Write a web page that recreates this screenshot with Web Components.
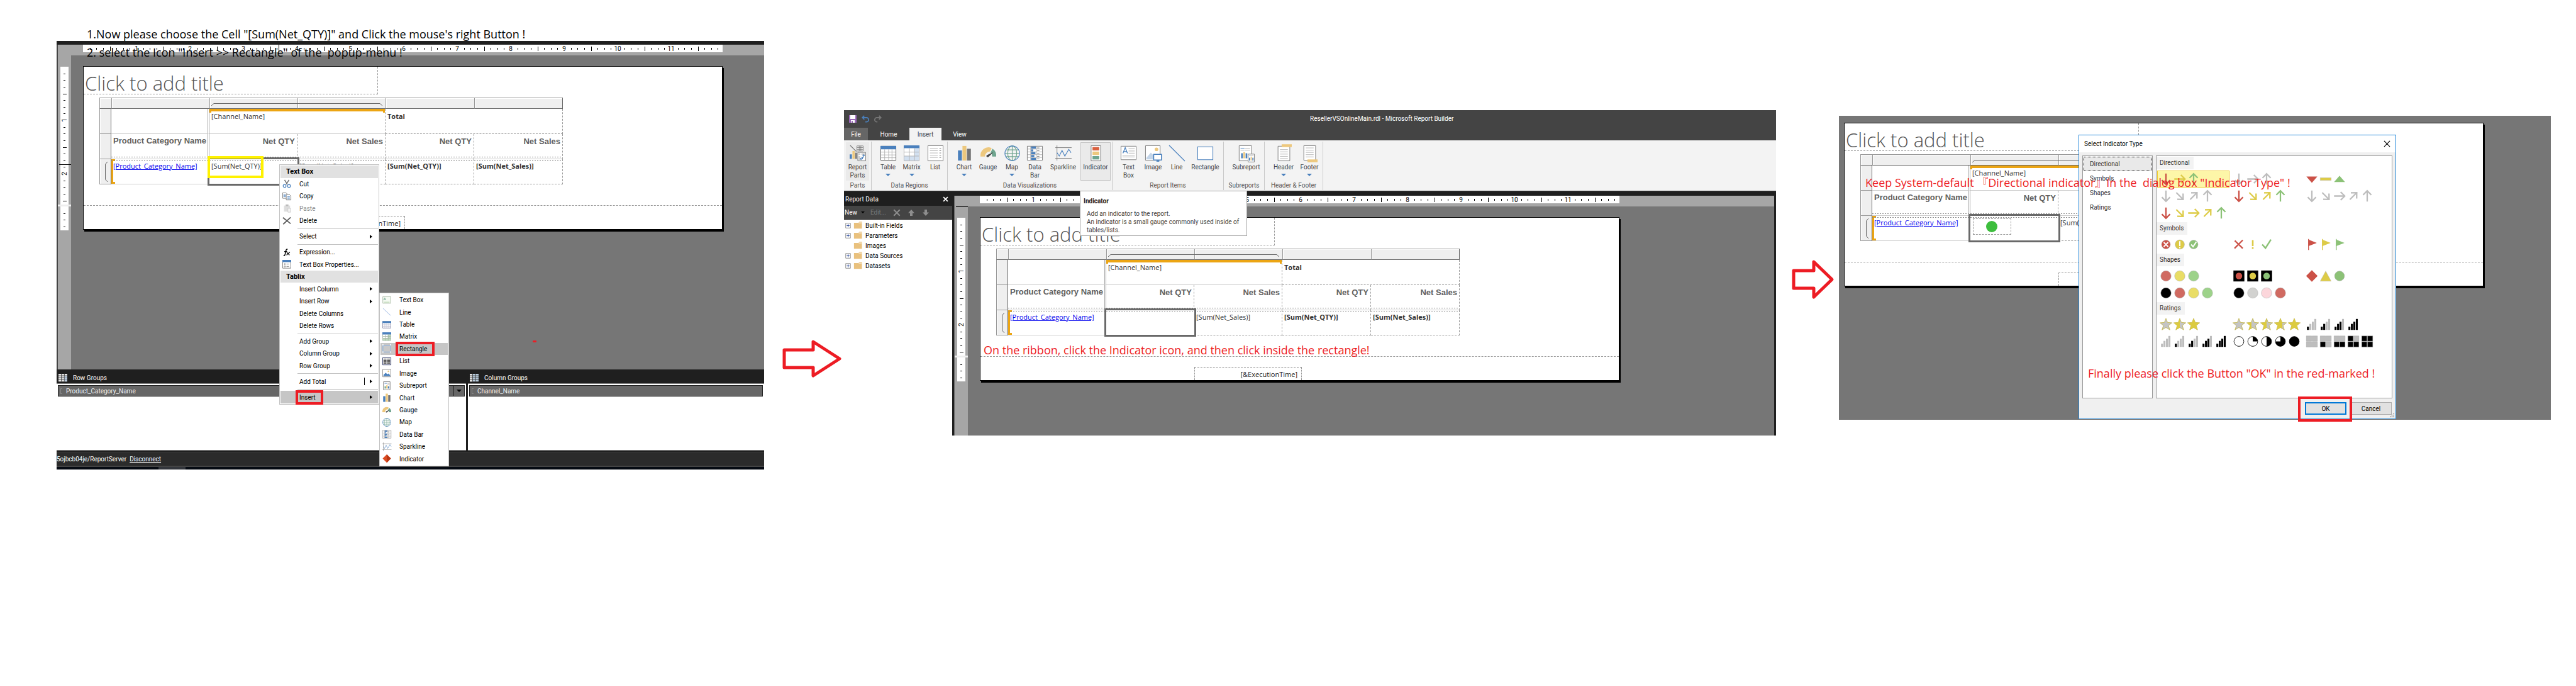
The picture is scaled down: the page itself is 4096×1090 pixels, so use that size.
<!DOCTYPE html>
<html lang="en">
<head>
<meta charset="utf-8">
<title>Report Builder: adding an indicator</title>
<style>
  body { margin: 0; background: #fff; font-family: "Open Sans", "Noto Sans CJK TC", sans-serif; }
</style>
</head>
<body>
<tutorial-board></tutorial-board>

<script>
/* ---------- helpers ---------- */
const UI = 'Roboto, "Liberation Sans", sans-serif';
const define = (name, css, html, setup) => {
  const tpl = document.createElement('template');
  tpl.innerHTML = `<style>*{box-sizing:border-box}${css}</style>${html}`;
  customElements.define(name, class extends HTMLElement {
    constructor() {
      super();
      this.attachShadow({ mode: 'open' }).append(tpl.content.cloneNode(true));
    }
    connectedCallback() { if (setup) setup(this, this.shadowRoot); }
  });
};

/* ---------- icons ---------- */
const G = '#757575', B = '#4a80bd', O = '#edc87e', N = '#6fa58f', L = '#b0b0b0';
const hl = (x1, x2, ys, c = L, w = 1) => ys.map(y => `<path d="M${x1} ${y}H${x2}" stroke="${c}" stroke-width="${w}"/>`).join('');
const ICONS = {
  /* ribbon, on a 28 unit square */
  parts: [28, `<path d="M1 0L12 11" stroke="${G}" stroke-width="1.2"/><path d="M0 16h4v8H0z" fill="${B}"/><path d="M5 10h4v14H5z" fill="${O}"/><path d="M10 13h3v11h-3z" fill="${G}"/><path d="M13 1h11v9H13zM13 4h11M13 7h11M17 1v9M20 1v9" fill="#fff" stroke="${G}"/><path d="M14.500 12.500h14v15h-14z" fill="#fff" stroke="${G}"/><path d="M16 14h3v3h-3zM21 14h6v3h-6zM16 19h3v7h-3z" fill="#ccc"/><path d="M25 17v4h-4M19 24h4v-3M23 18.500l2-2 2 2M21 22l-2 2 2 2" fill="none" stroke="${B}" stroke-width="1.200"/>`],
  table: [28, `<path d="M.5 1.500h27v25H.5z" fill="#fff" stroke="${G}"/><path d="M0 1h28v6H0z" fill="${B}"/>${hl(1, 27, [12, 17, 22])}<path d="M7.500 7v19M14.500 7v19M20.500 7v19" stroke="${L}"/><path d="M.5 7v19.500h27V7" fill="none" stroke="${G}"/>`],
  matrix: [28, `<path d="M.5.5h27v27H.5z" fill="#fff" stroke="${L}"/><path d="M19 5h8v22h-8zM1 19h26v8H1z" fill="#d2e0f0"/><path d="M0 0h28v5H0z" fill="${B}"/>${hl(1, 27, [12, 19])}<path d="M10 5v22M19 5v22" stroke="${L}"/>`],
  list: [28, `<path d="M.5.5h27v27H.5z" fill="#fff" stroke="${G}"/>${hl(4, 18, [5.5, 9.5, 13.5, 17.5, 21.5])}${hl(21, 24, [5.5, 9.5, 13.5, 17.5, 21.5], G)}`],
  chart: [28, `<path d="M2.500 9h7v18h-7z" fill="${B}"/><path d="M10.500 1h7v26h-7z" fill="${O}"/><path d="M18.500 6h7v21h-7z" fill="${G}"/>`],
  gauge: [28, `<path d="M0 20a14 15 0 0 1 20-15l-3 6A8.500 9 0 0 0 8 20z" fill="${O}"/><path d="M21.500 6A15 15 0 0 1 28 20h-7a9 9 0 0 0-3-7z" fill="${N}"/><path d="M23 12l-8.500 8.500a2.500 2 0 1 1-3-3.200z" fill="#444"/>`],
  map: [28, `<g fill="none" stroke-width="1.300"><path d="M3 8h22M1 14h26M3 20h22" stroke="${N}"/><ellipse cx="14" cy="14" rx="8" ry="13" stroke="${N}"/><path d="M14 1v26" stroke="${N}"/><circle cx="14" cy="14" r="13" stroke="${B}"/></g>`],
  databar: [28, `<path d="M.5 1.500h27v25H.5z" fill="#fff" stroke="${G}"/><path d="M7 2h9v4H7zM7 7h4v4H7zM7 12h8v4H7zM7 17h6v4H7zM7 22h9v4H7z" fill="${B}"/>${hl(1, 27, [6.5, 11.5, 16.5, 21.5])}<path d="M6.500 2v24M16.500 2v24" stroke="${L}"/>${hl(18, 22, [4.5, 9.5, 14.5, 19.5, 24], G)}`],
  sparkline: [28, `<path d="M3 0v27M0 4h29M0 23h29" stroke="${G}" fill="none"/><path d="M3 13l4 6 5-10 5 10 7-12 4 6" fill="none" stroke="${B}" stroke-width="1.300"/>`],
  indicator: [28, `<path d="M5.500.5h17v27h-17z" fill="#fff" stroke="${G}"/><path d="M8 3h12v6H8z" fill="#d9603f"/><path d="M8 11h12v6H8z" fill="${O}"/><path d="M8 19h12v6H8z" fill="${N}"/>`],
  textbox: [28, `<path d="M.5 1.500h27v24H.5z" fill="#fff" stroke="${G}"/><path d="M4 14L8 4l4 10M5.500 11h5" fill="none" stroke="${B}" stroke-width="1.500"/>${hl(14, 25, [5.5, 8.5, 11.5, 14.5])}${hl(3, 25, [17.5, 20.5])}`],
  image: [28, `<path d="M.5.5h26v26H.5z" fill="#fff" stroke="${G}"/><path d="M2 25V22l8-9 6 6v6z" fill="#c3d5e9"/><circle cx="20" cy="7" r="3.200" fill="${O}"/><path d="M15 16h14v10H15z" fill="#fff" stroke="${B}" stroke-width="1.800"/><path d="M20 28h5" stroke="${B}" stroke-width="2"/>`],
  line: [28, `<path d="M0 0l28 28" stroke="${B}" stroke-width="1.300"/>`],
  rectangle: [28, `<path d="M.5 2.500h27v23H.5z" fill="#fff" stroke="${B}" stroke-width="1.200"/>`],
  subreport: [28, `<path d="M1.500.5h22v27h-22z" fill="#fff" stroke="${G}"/><path d="M4 5h7" stroke="${B}"/>${hl(12, 21, [5.5, 8.5])}${hl(4, 11, [8.5])}<path d="M5 14h3v9H5z" fill="${B}"/><path d="M9 12h3v11H9z" fill="${O}"/><path d="M13 14h3v9h-3z" fill="${B}"/><path d="M17.500 15.500h11v14h-11z" fill="#fff" stroke="${G}"/><path d="M19 22h2v5h-2z" fill="${B}"/><path d="M22 20h2v7h-2z" fill="${O}"/><path d="M25 22h2v5h-2z" fill="${B}"/>${hl(19, 27, [18])}`],
  header: [28, `<path d="M3.500 1.500h21v26h-21z" fill="#fff" stroke="${G}"/>${hl(7, 21, [7.5, 11.5, 15.5, 19.5, 23.5])}<path d="M10-2h18v5H10z" fill="${O}"/>`],
  footer: [28, `<path d="M3.500.5h21v26h-21z" fill="#fff" stroke="${G}"/>${hl(7, 21, [4.5, 8.5, 12.5, 16.5, 20.5])}<path d="M10 25h18v5H10z" fill="${O}"/>`],
  /* menu, on a 16 unit square */
  cut: [16, `<path d="M4 1l5 8M12 1L7 9" stroke="${G}" stroke-width="1.800"/><g fill="none" stroke="${B}" stroke-width="1.400"><circle cx="4" cy="12" r="2.600"/><circle cx="12" cy="12" r="2.600"/></g>`],
  copy: [16, `<path d="M.6 1.500h6l2 2v8h-8z" fill="#fff" stroke="${G}"/><path d="M7 4.500h5.500l3 3v7H7z" fill="#fff" stroke="${G}"/>${hl(2, 6, [4.5, 6.5, 8.5], B)}${hl(9, 13.5, [8.5, 10.5, 12.5], B)}`],
  paste: [16, `<path d="M3 3h11v11H3z" fill="#ddd"/><path d="M6 1h5v3H6z" fill="#bbb"/><path d="M10 8h5v7h-5z" fill="#f4f4f4" stroke="#ccc"/>`],
  delete: [16, `<path d="M1 2l14 11M15 1.500L1.500 14" stroke="#5d5d5d" stroke-width="2"/>`],
  fx: [16, `<path d="M9.500 2.500C7 1.500 6.500 4 5.500 9S4 14.500 2 13.500M3.500 6.500h5" fill="none" stroke="#000" stroke-width="1.700"/><path d="M8 8l5 5M13.500 7.500L7.500 13" stroke="#000" stroke-width="1.500"/>`],
  props: [16, `<path d="M.6 1h14.800v14H.6z" fill="#fff" stroke="${G}"/><path d="M0 0h16v4H0z" fill="${B}"/><circle cx="4.500" cy="7.500" r="1.300" fill="${G}"/><circle cx="4.500" cy="11.800" r="1.100" fill="none" stroke="${G}"/>${hl(7.5, 12, [7.5, 11.8], G)}`],
  mtext: [16, `<path d="M.8 1.500h14.400v12H.8z" fill="#f5faf2" stroke="#a9b9a5"/><path d="M2.500 8L4.300 3.500 6 8M3 6.500h2.500" fill="none" stroke="${N}"/><path d="M3 11.500h10" stroke="#a8cfa0"/>`],
  mline: [16, `<path d="M1 1l14 13" stroke="#8faee0"/>`],
  mrect: [16, `<path d="M1 2h14v12H1z" fill="#c9c9c9" stroke="#8cb4e2" stroke-width="1.200"/><path d="M0 0h2v2H0zM14 0h2v2h-2zM0 13h2v2H0zM14 13h2v2h-2z" fill="#fff"/>`],
  mlist: [16, `<path d="M.5 1.500h15v13H.5z" fill="#fff" stroke="#222c5c"/>${hl(2, 7.5, [4, 6.5, 9, 11.5], '#111', 1.3)}${hl(8.5, 14, [4, 6.5, 9, 11.5], '#111', 1.3)}`],
  mtable: [16, `<path d="M.6 2h14.800v12H.6z" fill="#fff" stroke="#8c8ca8"/><path d="M0 1.500h16v3.500H0z" fill="${B}"/><path d="M1 8h14M1 11h14M4.500 5v9M8 5v9M11.500 5v9" stroke="#c5c5d5"/>`],
  mmatrix: [16, `<path d="M.6 1h14.800v14H.6z" fill="#fff" stroke="#a5b5a5"/><path d="M10 4h5v11H1v-4h9z" fill="#c0dcc0"/><path d="M0 0h16v4H0z" fill="${B}"/><path d="M1 7.500h14M1 11h14M5.500 4v11M10.500 4v11" stroke="#a5b5a5"/>`],
  mimage: [16, `<path d="M.6 1h14.800v13.500H.6z" fill="#fff" stroke="#888"/><path d="M2 13V11l4-4 3 3 2-1.500 3 3V13z" fill="${B}"/><circle cx="11" cy="4.500" r="1.500" fill="${O}"/>`],
  msub: [16, `<path d="M2 .6h12v14.800H2z" fill="#fff" stroke="${G}"/>${hl(4, 8, [3.5], B)}${hl(9, 13, [3.5, 5])}<path d="M4 9h2.500v4H4z" fill="${N}"/><path d="M7 7h2.500v6H7z" fill="${O}"/><path d="M10 9h2.500v4H10z" fill="${B}"/>`],
  mindicator: [16, `<path d="M8 0l7.500 7.500L8 15 .5 7.500z" fill="#dc4b22"/><path d="M8 0l7.500 7.500L8 15z" fill="#b83714"/>`],
  grid: [16, `<path d="M0 0h16v14H0z" fill="#e6e6e6"/><path d="M0 3.500h16M0 7h16M0 10.500h16M5.300 0v14M10.700 0v14" stroke="#3a3a3a"/><path d="M11 4h5v10h-5z" fill="#9db8d6" opacity=".6"/>`],
  gridcols: [16, `<path d="M0 0h16v14H0z" fill="#b8cbdc"/><path d="M0 0h4.500v14H0z" fill="#e6e6e6"/><path d="M0 3.500h16M0 7h16M0 10.500h16M5 0v14M10.700 0v14" stroke="#3a3a3a"/>`],
  /* window and tree */
  save: [12, `<path d="M0 0h12v12H0z" fill="#9968b8"/><path d="M2 0h8v6H2z" fill="#fff"/><path d="M3 8h6v4H3z" fill="#fff"/><path d="M4 9h2v3H4z" fill="#9968b8"/>`],
  undo: [14, `<path d="M5 1L1.500 4.500 5 8M2 4.500h7a3.700 3.700 0 0 1 0 8H7" fill="none" stroke="${B}" stroke-width="2"/>`],
  redo: [14, `<path d="M9 1l3.500 3.500L9 8M12 4.500H5a3.700 3.700 0 0 0 0 8h1" fill="none" stroke="#777" stroke-width="2"/>`],
  plus: [10, `<path d="M.8.8h8.400v8.400H.8z" fill="#fff" stroke="#8a8a8a"/><path d="M2.500 5h5M5 2.500v5" stroke="#27469a" stroke-width="1.200"/>`],
  folder: [16, `<path d="M1 3.500h8l2-2h4.500V14H1z" fill="#e9c17e"/><path d="M9.500 3.500h5.500" stroke="#fff"/>`],
  remove: [14, `<path d="M1.500 1.500l11 11M12.500 1.500l-11 11" stroke="#8d8d8d" stroke-width="2.400"/>`],
  up: [12, `<path d="M6 1l5 5.500H8V11H4V6.500H1z" fill="#8d8d8d"/>`],
  down: [12, `<path d="M6 11L1 5.500h3V1h4v4.500h3z" fill="#8d8d8d"/>`],
  close: [12, `<path d="M1 1l10 10M11 1L1 11" stroke="currentColor" stroke-width="1.300"/>`],
  closebold: [12, `<path d="M1.500 1.500l9 9M10.500 1.500l-9 9" stroke="#fff" stroke-width="2.400"/>`]
};
define('ui-icon',
  `:host{display:block;width:14px;height:14px;flex:none}svg{display:block;width:100%;height:100%;overflow:visible}`,
  `<svg aria-hidden="true"></svg>`,
  (el, root) => {
    const [n, art] = ICONS[el.getAttribute('name')];
    const svg = root.querySelector('svg');
    svg.setAttribute('viewBox', `0 0 ${n} ${n}`);
    svg.innerHTML = art;
  });

/* ---------- notes and arrows ---------- */
define('step-note',
  `:host{display:block;position:absolute;white-space:pre;z-index:5;color:#ed1c24;font:18px/29px "Open Sans","Noto Sans CJK TC",sans-serif}`,
  `<slot></slot>`);

define('step-arrow',
  `:host{display:block}svg{display:block;overflow:visible}`,
  `<svg fill="none" stroke="#ed1c24" stroke-width="5" stroke-linejoin="round"><path/></svg>`,
  (el, root) => {
    const w = +el.getAttribute('width'), h = +el.getAttribute('height'), neck = +el.getAttribute('neck'), t = +el.getAttribute('shaft');
    const svg = root.querySelector('svg'), a = (h - t) / 2;
    svg.setAttribute('width', w); svg.setAttribute('height', h);
    svg.firstElementChild.setAttribute('d', `M2 ${a}H${neck}V2L${w - 3} ${h / 2}L${neck} ${h - 2}V${h - a}H2Z`);
  });

/* ---------- rulers: 85px to the inch, ticks on each eighth ---------- */
const INCH = 85;
const eighths = (len, fn) => { let s = ''; for (let k = 1; k * INCH / 8 < len - 2; k++) s += fn(k, Math.round(k * INCH / 8)); return s; };
define('ruler-top',
  `:host{display:block;background:#fff;height:12px}svg{display:block;width:100%;height:12px}text{font:10px ${UI};text-anchor:middle}`,
  `<svg></svg>`,
  (el, root) => {
    const m = el.getAttribute('marker');
    root.querySelector('svg').innerHTML = eighths(1017, (k, x) =>
      k % 8 === 0 ? `<text x="${x}" y="10">${k / 8}</text>`
      : k % 4 === 0 ? `<path d="M${x}.5 3v7" stroke="#000"/>` : `<path d="M${x}.5 5v3" stroke="#000"/>`)
      + (m ? `<path d="M${m}.5 0v12" stroke="#000"/>` : '');
  });
define('ruler-side',
  `:host{display:flex;flex-direction:column;flex:none;width:21px;background:#a6a6a6;padding-top:18px;position:relative}
   div{width:13px;background:#fff;margin-left:4px}.body{height:219px}.foot{height:38px}.gap{width:21px;height:3px;margin:0;background:#eee}
   svg{display:block;width:13px;height:100%;overflow:visible}text{font:10px ${UI};text-anchor:middle}`,
  `<div class="body"><svg></svg></div><div class="gap"></div><div class="foot"><svg></svg></div>`,
  (el, root) => {
    const tick = (k, y) => k % 8 === 0 ? `<text transform="translate(10 ${y}) rotate(-90)">${k / 8}</text>`
      : k % 4 === 0 ? `<path d="M4 ${y}.5h6" stroke="#000"/>` : `<path d="M5 ${y}.5h3" stroke="#000"/>`;
    const [a, b] = root.querySelectorAll('svg');
    a.innerHTML = eighths(219, tick) + `<path d="M-2 ${el.getAttribute('marker')}.5h19" stroke="#000"/>`;
    b.innerHTML = eighths(38, tick);
  });

/* ---------- report page with its tablix ---------- */
const DASH = '1px dashed #999';
define('report-page', `
  :host{display:block;position:relative;flex:none;width:1017px;background:#fff;border:1px solid #000;box-shadow:2px 3px 0 #000;color:#333;font:11px/15px "Open Sans",sans-serif}
  .body{height:221px;border-bottom:${DASH}}
  .title{width:468px;height:44px;padding:8px 0 0 2px;border-right:${DASH};border-bottom:${DASH};font-size:31px;line-height:36px;font-weight:300;color:#555}
  .foot{height:37px;display:flex}
  .stamp{margin:16px 0 0 340px;width:171px;height:21px;border:${DASH};border-bottom:0;text-align:right;padding:3px 6px 0 0;color:#222}
  table{margin:5px 0 0 25px;width:737px;table-layout:fixed;border-collapse:separate;border-spacing:0}
  td,th{position:relative;height:40px;padding:4px 3px 0;vertical-align:top;text-align:left;font-weight:400;white-space:nowrap;border:0 dashed #999}
  thead th{height:18px;background:#efefef;border:solid #999;border-width:1px 0 1px 1px;border-bottom-color:#666;box-shadow:inset 1px 1px #fff;padding:0}
  thead th:last-child{border-right:1px solid #666}
  tbody th{background:#efefef;border:solid #999;border-width:0 1px 1px 1px;border-right-color:#666;box-shadow:inset 1px 0 #fff}
  .b{font-weight:700}
  .solid{border-bottom:1px solid #ccc}.dash{border-bottom-width:1px}.r{border-right-width:1px}
  .head{font:700 13px/15px "Liberation Sans",sans-serif;color:#606060;text-align:right}
  .left{text-align:left;padding-top:3px}
  .last td{padding-top:3px}
  .up::after,.last td::after{content:"";position:absolute;left:0;right:0;height:1px;background:repeating-linear-gradient(90deg,#888 0 2px,transparent 2px 4px)}
  .up::after{bottom:2px}.last td::after{top:2px}
  .up{border-bottom:1px solid #ccc}
  .double{border-right:3px double #aaa}
  a{color:#00e}
  .group{position:absolute;left:0;right:0;top:0;height:6px;border:solid #eca513;border-width:4px 3px 0}
  .rowgroup{position:absolute;left:0;top:0;bottom:0;width:6px;border:solid #eca513;border-width:3px 0 3px 3px}
  .span,.vspan{position:absolute;fill:none;stroke:#666;overflow:visible}
  .span{left:2px;top:7px;width:275px;height:5px;z-index:1}.vspan{left:7px;top:4px;width:5px;height:33px}
  .sel::before{content:"";position:absolute;inset:-3px -3px -2px -3px;border:3px solid #696969;z-index:1}`,
  `<div class="body">
    <div class="title">Click to add title</div>
    <table>
      <colgroup><col style="width:19px"><col style="width:156px"><col style="width:140px"><col style="width:140px"><col style="width:141px"><col></colgroup>
      <thead><tr><th></th><th></th><th><svg class="span"><path d="M0 5L4 1.500H268L272 5"/></svg></th><th></th><th></th><th></th></tr></thead>
      <tbody>
        <tr><th></th><td class="solid double"></td><td class="solid r" colspan="2"><span class="group"></span>[Channel_Name]</td><td class="dash r b" colspan="2">Total</td></tr>
        <tr><th></th><td class="head left up double">Product Category Name</td><td class="head up r">Net QTY</td><td class="head up r">Net Sales</td><td class="head up r">Net QTY</td><td class="head up r">Net Sales</td></tr>
        <tr class="last"><th><svg class="vspan"><path d="M5 0L1.500 4V28L5 32"/></svg></th><td class="solid"><span class="rowgroup"></span><a href="#drill">[Product_Category_Name]</a></td><td class="sel"><slot name="cell"></slot></td><td class="dash r">[Sum(Net_Sales)]</td><td class="dash r b">[Sum(Net_QTY)]</td><td class="dash r b">[Sum(Net_Sales)]</td></tr>
      </tbody>
    </table>
  </div>
  <div class="foot"><div class="stamp">[&amp;ExecutionTime]</div></div>`);

define('report-designer', `
  :host{display:flex;flex-direction:column;min-width:0;overflow:hidden;background:#767676}
  .top{height:17px;background:#a6a6a6;padding-left:40px;flex:none}
  .main{display:flex;flex:1;min-height:0}
  .canvas{flex:1;min-width:0;padding:17px 0 0 19px}
  ruler-top{width:1017px}`,
  `<div class="top"><ruler-top></ruler-top></div><div class="main"><ruler-side></ruler-side><div class="canvas"><slot></slot></div></div>`,
  (el, root) => {
    const top = root.querySelector('ruler-top'), side = root.querySelector('ruler-side');
    for (const [r, a] of [[top, 'marker-x'], [side, 'marker-y']]) {
      const c = document.createElement(r.localName);
      if (el.hasAttribute(a)) c.setAttribute('marker', el.getAttribute(a));
      r.replaceWith(c);
    }
  });

/* ---------- menus ---------- */
define('popup-menu',
  `:host{display:flex;flex-direction:column;position:absolute;z-index:3;background:#fff;border:1px solid #c3c3c3;padding:1px;color:#000;font:10px ${UI}}`,
  `<slot></slot>`);
define('menu-title',
  `:host{display:flex;align-items:center;flex:22 1 0;min-height:0;background:#e1e1e1;padding-left:9px;font-weight:700;font-size:11px}`, `<slot></slot>`);
define('menu-line', `:host{display:flex;align-items:center;flex:6 1 0;min-height:0}i{flex:1;height:1px;background:#c3c3c3;margin-left:27px}`, `<i></i>`);
define('menu-item', `
  :host{display:block;flex:22 1 0;min-height:0}
  button{display:grid;grid-template-columns:27px 1fr auto;align-items:center;width:100%;height:100%;padding:0 9px 0 3px;border:0;background:none;color:inherit;font:inherit;text-align:left}
  :host([dim]) button{color:#8d8d8d}
  :host([hot]) button{background:#c6c6c6}
  .label{position:relative;justify-self:start}
  :host([marked]) .label::after{content:"";position:absolute;inset:-6px -12px -6px -6px;border:4px solid #ed1c24;z-index:1}
  .arrow{display:none;border:solid transparent;border-width:3px 0 3px 4px;border-left-color:#000}
  :host([sub]) .arrow{display:block}
  :host([split]) .arrow{position:relative}
  :host([split]) .arrow::before{content:"";position:absolute;left:-13px;top:-6px;height:12px;width:1px;background:#000}`,
  `<button type="button" role="menuitem"><span class="icon"></span><span class="label"><slot></slot></span><span class="arrow"></span></button>`,
  (el, root) => {
    const n = el.getAttribute('icon');
    if (n) root.querySelector('.icon').innerHTML = `<ui-icon name="${n}"></ui-icon>`;
  });

/* ---------- row and column groups, status bar ---------- */
define('group-pane', `
  :host{display:block;flex:none;background:#1f1f1f;color:#fff;font:10px ${UI}}
  .cols{display:grid;grid-template-columns:651fr 471fr;column-gap:3px}
  .cap{display:flex;align-items:center;gap:9px;height:22px;padding:6px 0 0 3px;line-height:14px}
  .box{height:107px;background:#fff;border-top:1px solid #888;border-bottom:1px solid #888;padding:2px}
  .bar{display:flex;height:18px;background:#666;border:1px solid #222;color:#f3f3f3;align-items:center;padding-left:3px}
  .bar i{width:3px;height:9px;border:1px solid #888;border-right:0;margin-right:6px}
  .bar button{margin-left:auto;width:17px;height:100%;padding:0;border:0;border-left:1px solid #222;background:none;display:grid;place-items:center}
  .bar button::after{content:"";border:4px solid transparent;border-top-color:#000;border-bottom:0}
  .status{height:23px;margin-top:3px;background:#2b2b2b;border-top:1px solid #444;border-bottom:2px solid #444;line-height:20px;overflow:hidden;white-space:nowrap}
  .status a{color:#fff;margin-left:5px}
  .task{height:4px;background:#050a12;padding-left:162px}.task i{display:block;width:43px;height:4px;background:#33363c}`,
  `<div class="cols"><div class="cap"><ui-icon name="grid"></ui-icon>Row Groups</div><div class="cap"><ui-icon name="gridcols"></ui-icon>Column Groups</div>
   <div class="box"><div class="bar"><i></i>Product_Category_Name<button type="button" aria-label="Row group options"></button></div></div>
   <div class="box"><div class="bar"><i></i>Channel_Name</div></div></div>
   <div class="status">5ojbcb04je/ReportServer<a href="#disconnect">Disconnect</a></div><div class="task"><i></i></div>`);

/* ---------- ribbon ---------- */
define('ribbon-button', `
  :host{display:block;flex:none}
  button{display:flex;flex-direction:column;align-items:center;width:100%;height:61px;padding:5px 0 0;border:1px solid transparent;border-top:0;background:none;color:#444;font:10px/13px ${UI}}
  :host([lit]) button{background:#eaeaea}
  :host([hover]) button{background:#eaeaea;border:1px solid #c4c4c4;padding-top:4px}
  ui-icon{width:25px;height:25px;margin-bottom:3px}
  .drop{display:none;border:4px solid transparent;border-top-color:${B};border-bottom:0;margin-top:4px}
  :host([drop]) .drop{display:block}`,
  `<button type="button"><span class="ico"></span><slot></slot><span class="drop"></span></button>`,
  (el, root) => {
    root.querySelector('.ico').innerHTML = `<ui-icon name="${el.getAttribute('icon')}"></ui-icon>`;
    el.style.width = el.getAttribute('size') + 'px';
  });
define('ribbon-group', `
  :host{display:flex;flex-direction:column;flex:none;position:relative;height:77px;margin-top:2px;border-right:1px solid #c9c9c9;color:#555;font:10px/14px ${UI}}
  .row{display:flex;padding-top:1px;height:64px}
  .name{text-align:center}`,
  `<div class="row"><slot></slot></div><div class="name"></div>`,
  (el, root) => {
    root.querySelector('.name').textContent = el.getAttribute('label');
    root.querySelector('.row').style.paddingLeft = el.getAttribute('inset') + 'px';
    el.style.width = el.getAttribute('size') + 'px';
  });
define('app-window', `
  :host{display:flex;flex-direction:column;position:relative;height:517px;font:10px ${UI}}
  .title{background:#444;color:#fff;height:48px;display:flex;flex-direction:column;flex:none}
  .cap{display:grid;grid-template-columns:1fr 1fr;height:28px;align-items:center;line-height:28px}
  .quick{display:flex;gap:8px;padding-left:8px}.quick ui-icon{width:12px;height:12px}
  .tabs{display:flex;gap:3px;height:20px}
  .tabs button{border:0;padding:0;background:none;color:#fff;font:inherit;width:60px}
  .tabs .file{width:38px;background:#666}.tabs .on{width:51px;background:#f3f3f3;color:#444}.tabs .view{width:52px}
  .ribbon{display:flex;height:81px;background:#f3f3f3;border-bottom:1px solid #444;flex:none}
  .work{display:flex;flex:1;min-height:0;background:#1f1f1f}
  .data{width:173px;display:flex;flex-direction:column;color:#fff}
  .head{display:flex;justify-content:space-between;align-items:center;height:23px;padding:2px 7px 0 2px}.head ui-icon{width:9px;height:9px}
  .tools{display:flex;align-items:center;height:21px;background:#444;margin-right:1px;padding-left:1px}
  .tools b{font-weight:400;color:#777;margin:0 11px 0 9px}.tools ui-icon{width:12px;height:12px;margin-right:11px}
  .tools i{border:3px solid transparent;border-top-color:#000;border-bottom:0;margin-left:6px}
  ul{list-style:none;margin:0 1px 0 0;padding:1px 0 0 2px;flex:1;background:#fff;color:#000;border-top:1px solid #222}
  li{display:grid;grid-template-columns:13px 19px 1fr;align-items:center;height:16px}
  li .p{width:9px;height:9px}
  .design{flex:1;min-width:0;display:flex;flex-direction:column;padding:7px 3px 0 2px}
  report-designer{flex:1;min-height:0;border-left:1px solid #666}
  .tip{position:absolute;left:375px;top:128px;width:266px;height:72px;z-index:3;background:#fff;border:1px solid #a5a5a5;color:#444;line-height:13px;padding:9px 9px 0 5px}
  .tip b{display:block;color:#222;margin-bottom:7px}.tip p{margin:0 0 0 5px;width:250px}`,
  `<div class="title"><div class="cap"><div class="quick"><ui-icon name="save"></ui-icon><ui-icon name="undo"></ui-icon><ui-icon name="redo"></ui-icon></div><span>ResellerVSOnlineMain.rdl - Microsoft Report Builder</span></div>
   <div class="tabs"><button type="button" class="file">File</button><button type="button">Home</button><button type="button" class="on">Insert</button><button type="button" class="view">View</button></div></div>
   <div class="ribbon">
    <ribbon-group label="Parts" size="44" inset="3"><ribbon-button icon="parts" size="37" lit>Report<br>Parts</ribbon-button></ribbon-group>
    <ribbon-group label="Data Regions" size="121" inset="7"><ribbon-button icon="table" size="38" drop>Table</ribbon-button><ribbon-button icon="matrix" size="37" drop>Matrix</ribbon-button><ribbon-button icon="list" size="38">List</ribbon-button></ribbon-group>
    <ribbon-group label="Data Visualizations" size="262" inset="7"><ribbon-button icon="chart" size="38" drop>Chart</ribbon-button><ribbon-button icon="gauge" size="38">Gauge</ribbon-button><ribbon-button icon="map" size="38" drop>Map</ribbon-button><ribbon-button icon="databar" size="35">Data<br>Bar</ribbon-button><ribbon-button icon="sparkline" size="55">Sparkline</ribbon-button><ribbon-button icon="indicator" size="48" hover>Indicator</ribbon-button></ribbon-group>
    <ribbon-group label="Report Items" size="177" inset="6"><ribbon-button icon="textbox" size="39">Text<br>Box</ribbon-button><ribbon-button icon="image" size="39">Image</ribbon-button><ribbon-button icon="line" size="36">Line</ribbon-button><ribbon-button icon="rectangle" size="55">Rectangle</ribbon-button></ribbon-group>
    <ribbon-group label="Subreports" size="65" inset="7"><ribbon-button icon="subreport" size="57">Subreport</ribbon-button></ribbon-group>
    <ribbon-group label="Header &amp; Footer" size="93" inset="9"><ribbon-button icon="header" size="42" drop>Header</ribbon-button><ribbon-button icon="footer" size="40" drop>Footer</ribbon-button></ribbon-group>
   </div>
   <div class="work">
    <div class="data"><div class="head">Report Data<ui-icon name="closebold"></ui-icon></div>
     <div class="tools">New<i></i><b>Edit...</b><ui-icon name="remove"></ui-icon><ui-icon name="up"></ui-icon><ui-icon name="down"></ui-icon></div>
     <ul><li><ui-icon class="p" name="plus"></ui-icon><ui-icon name="folder"></ui-icon>Built-in Fields</li><li><ui-icon class="p" name="plus"></ui-icon><ui-icon name="folder"></ui-icon>Parameters</li><li><span></span><ui-icon name="folder"></ui-icon>Images</li><li><ui-icon class="p" name="plus"></ui-icon><ui-icon name="folder"></ui-icon>Data Sources</li><li><ui-icon class="p" name="plus"></ui-icon><ui-icon name="folder"></ui-icon>Datasets</li></ul></div>
    <div class="design"><report-designer marker-y="-17"><report-page></report-page></report-designer></div>
   </div>
   <div class="tip" role="tooltip"><b>Indicator</b><p>Add an indicator to the report.</p><p>An indicator is a small gauge commonly used inside of tables/lists.</p></div>`);

/* ---------- indicator gallery ---------- */
const R = '#cb5147', Y = '#ddcb47', V = '#8cc277', S = '#bdbdbd', K = '#000';
const PR = '#d06a61', PY = '#e9dd66', PV = '#9dd28a';
let clipId = 0;
const arrow = (c, deg) => {
  const d = deg % 90 ? 'M-9 0H8.500M1-7.500L8.700 0 1 7.500' : 'M-10 0H9M2-7.500L9.500 0 2 7.500';
  return `<g transform="rotate(${deg})" fill="none" stroke="${c}" stroke-width="2.600"><path d="${d}"/></g>`;
};
const disc = (c, r = 9.5) => `<circle r="${r}" fill="${c}" stroke="#aaa" stroke-width=".6"/>`;
const STAR = 'M0-11L2.900-3.600 11-3 4.700 2 7.200 10 0 5.600-7.200 10-4.700 2-11-3-2.900-3.600Z';
const star = f => { const id = 'c' + clipId++; return `<clipPath id="${id}"><path d="M-12-12h${24 * f}v24h${-24 * f}z"/></clipPath><path d="${STAR}" fill="#c4c4c4" stroke="#c3b650" stroke-width="1"/><path d="${STAR}" fill="#dccb3f" clip-path="url(#${id})"/>`; };
const bars = n => [6, 11, 15, 20].map((h, i) => `<path d="M${-9 + i * 4.5} ${10 - h}h3.600v${h}h-3.600z" fill="${i < n ? K : S}"/>`).join('');
const pie = q => `<circle r="9" fill="${q === 4 ? K : '#fff'}" stroke="#000"/>` + (q && q < 4 ? `<path d="M0 0V-9A9 9 0 ${q > 2 ? 1 : 0} 1 ${[9, 0, -9][q - 1]} ${[0, 9, 0][q - 1]}Z"/>` : '');
const quad = on => [[-10, -10], [0.5, -10], [-10, 0.5], [0.5, 0.5]].map(([x, y], i) => `<path d="M${x} ${y}h9.600v9.600h-9.600z" fill="${on[i] === '1' ? K : S}" stroke="#a5a5a5" stroke-width=".6"/>`).join('');
const flag = c => `<path d="M-6-9L9-3-6 3z" fill="${c}"/><path d="M-6-10V10" stroke="${c}" stroke-width="1.600"/>`;
const boxed = c => `<path d="M-10-10h20v20h-20z"/><circle r="6" fill="${c}"/>`;
const GALLERY = [
  ['Directional', [
    [arrow(R, 90), arrow(Y, 0), arrow(V, 270)],
    [arrow(S, 90), arrow(S, 0), arrow(S, 270)],
    [`<path d="M-10-4.500h20L0 7z" fill="${R}"/>`, `<path d="M-10-2.500h20v5h-20z" fill="${Y}" stroke="#bbb" stroke-width=".6"/>`, `<path d="M-10 5.500h20L0-6z" fill="${V}"/>`],
    [arrow(S, 90), arrow(S, 45), arrow(S, 315), arrow(S, 270)],
    [arrow(R, 90), arrow(Y, 45), arrow(Y, 315), arrow(V, 270)],
    [arrow(S, 90), arrow(S, 45), arrow(S, 0), arrow(S, 315), arrow(S, 270)],
    [arrow(R, 90), arrow(Y, 45), arrow(Y, 0), arrow(Y, 315), arrow(V, 270)]]],
  ['Symbols', [
    [disc(R, 8) + `<path d="M-4-4L4 4M4-4L-4 4" stroke="#fff" stroke-width="2.400"/>`, disc(Y, 8.5) + `<path d="M0-6V3M0 4.500V7" stroke="#fff" stroke-width="2.400"/>`, disc(V, 8) + `<path d="M-4.500 0L-1 4 5-5" fill="none" stroke="#fff" stroke-width="2.200"/>`],
    [`<path d="M-7.500-7L7 7M7-8L-8 7" stroke="${R}" stroke-width="2.600"/>`, `<path d="M0-8V3M0 5V8" stroke="${Y}" stroke-width="3"/>`, `<path d="M-8 0L-2 6.500 8-9" fill="none" stroke="${V}" stroke-width="2.800"/>`],
    [flag(R), flag(Y), flag(V)]]],
  ['Shapes', [
    [disc(PR), disc(PY), disc(PV)],
    [boxed(R), boxed(Y), boxed(V)],
    [`<path d="M0-10.500L10.500 0 0 10.500-10.500 0z" fill="${R}"/>`, `<path d="M0-9L10 9.500H-10z" fill="${Y}" stroke="#bbb" stroke-width=".6"/>`, disc(V, 9)],
    [disc(K), disc(PR), disc(PY), disc(PV)],
    [disc(K), disc('#d2d2d0'), disc('#fcd6db'), disc(PR)]]],
  ['Ratings', [
    [0, .5, 1].map(star), [0, .4, .5, .65, 1].map(star), [1, 2, 3, 4].map(bars),
    [0, 1, 2, 3, 4].map(bars), [0, 1, 2, 3, 4].map(pie), ['0000', '0010', '0011', '1011', '1111'].map(quad)]]
];
define('indicator-gallery', `
  :host{display:block}
  .name{display:block;width:max-content;height:20px;margin:1px 0 2px;padding:0 6px 0 5px;background:#f3f3f3;line-height:20px;color:#333}
  .set{display:grid;grid-template-columns:repeat(3,116px)}
  button{display:flex;height:27px;padding:0 0 0 3px;margin-left:1px;border:0;background:none}
  button.on{background:#fdf6a8;box-shadow:inset 0 0 0 1px #f0cb2c}
  svg{display:block;width:22px;height:27px;overflow:visible}`,
  `<div></div>`,
  (el, root) => {
    root.querySelector('div').innerHTML = GALLERY.map(([name, sets], g) =>
      `<span class="name">${name}</span><div class="set">` + sets.map((s, i) =>
        `<button type="button" aria-label="${name} ${i + 1}" class="${g + i ? '' : 'on'}">` +
        s.map(a => `<svg viewBox="-12.500 -15.500 25 31">${a}</svg>`).join('') + '</button>').join('') + '</div>').join('');
  });
define('indicator-dialog', `
  :host{display:flex;flex-direction:column;position:absolute;z-index:3;background:#f0f0f0;border:1px solid #1c84d8;color:#000;font:10px ${UI}}
  header{display:flex;align-items:center;justify-content:space-between;height:27px;padding:0 8px;background:#fff}
  header ui-icon{width:11px;height:11px}
  .main{display:grid;grid-template-columns:112px 1fr;gap:5px;padding:5px 5px 0;flex:1}
  .box{background:#fff;border:1px solid #999}
  .kinds{display:flex;flex-direction:column;padding:1px}
  .kinds button{height:23px;padding:0 0 0 9px;border:1px solid transparent;background:none;font:inherit;text-align:left;color:#333}
  .kinds button:first-child{border:1px dotted #000;background:#e9e9e9}
  footer{display:flex;justify-content:flex-end;gap:6px;padding:6px 6px 6px}
  footer button{position:relative;width:66px;height:20px;padding:0;border:1px solid #adadad;background:#e1e1e1;color:#000;font:inherit}
  footer .ok{border:2px solid #0078d7}
  .ok::after{content:"";position:absolute;inset:-11px -11px -13px -13px;border:4px solid #ed1c24;z-index:1}
  .grip{position:absolute;right:2px;bottom:2px;width:7px;height:7px}`,
  `<header>Select Indicator Type<ui-icon name="close"></ui-icon></header>
   <div class="main"><div class="box kinds"><button type="button">Directional</button><button type="button">Symbols</button><button type="button">Shapes</button><button type="button">Ratings</button></div><div class="box"><indicator-gallery></indicator-gallery></div></div>
   <footer><button type="button" class="ok">OK</button><button type="button">Cancel</button></footer>
   <svg class="grip" viewBox="0 0 8 8" fill="#aaa"><path d="M6 0h2v2H6zM3 3h2v2H3zM6 3h2v2H6zM0 6h2v2H0zM3 6h2v2H3zM6 6h2v2H6z"/></svg>`);

/* ---------- the board ---------- */
define('tutorial-board', `
  :host{display:grid;grid-template-columns:90fr 1125fr 127fr 1482fr 100fr 1132fr 40fr;align-items:start}
  .one{grid-column:2;position:relative;margin-top:65px;border-top:6px solid #1f1f1f;display:flex;flex-direction:column}
  .one report-designer{height:516px;border-left:2px solid #444}
  .a1{grid-column:3;justify-self:end;margin:541px 4px 0 0}
  .two{grid-column:4;position:relative;margin-top:175px}
  .a2{grid-column:5;justify-self:end;margin:414px 8px 0 0}
  .three{grid-column:6;position:relative;margin-top:184px;height:483px;background:#767676;padding:11px 0 0 8px}
  .n1{left:48px;top:-31px;color:#000}
  .n2{left:222px;top:367px}.n3{left:42px;top:92px}.n4{left:396px;top:395px}
  .ctx{left:354px;top:190px;width:159px;height:382px}
  .sub{left:513px;top:394px;width:111px;height:276px}
  .yellow{position:absolute;left:240px;top:177px;width:89px;height:35px;border:4px solid #fff200;z-index:2}
  .dot{position:absolute;left:757px;top:470px;width:6px;height:3px;border-radius:1px;background:#ed1c24}
  indicator-dialog{left:381px;top:30px;width:505px;height:452px}
  .gauge{position:absolute;left:4px;top:4px;width:61px;height:26px;border:1px dashed #999}
  .gauge::after{content:"";position:absolute;left:20px;top:3px;width:18px;height:18px;border-radius:50%;background:#3dbe3d}`,
  `<section class="one">
    <report-designer marker-x="311" marker-y="155"><report-page><span slot="cell">[Sum(Net_QTY)]</span></report-page></report-designer>
    <group-pane></group-pane>
    <span class="yellow"></span><span class="dot"></span>
    <popup-menu class="ctx" role="menu">
      <menu-title>Text Box</menu-title><menu-item icon="cut">Cut</menu-item><menu-item icon="copy">Copy</menu-item><menu-item icon="paste" dim>Paste</menu-item><menu-item icon="delete">Delete</menu-item><menu-line></menu-line>
      <menu-item sub>Select</menu-item><menu-line></menu-line><menu-item icon="fx">Expression...</menu-item><menu-item icon="props">Text Box Properties...</menu-item>
      <menu-title>Tablix</menu-title><menu-item sub>Insert Column</menu-item><menu-item sub>Insert Row</menu-item><menu-item>Delete Columns</menu-item><menu-item>Delete Rows</menu-item><menu-line></menu-line>
      <menu-item sub>Add Group</menu-item><menu-item sub>Column Group</menu-item><menu-item sub>Row Group</menu-item><menu-line></menu-line><menu-item sub split>Add Total</menu-item><menu-line></menu-line><menu-item sub hot marked>Insert</menu-item>
    </popup-menu>
    <popup-menu class="sub" role="menu">
      <menu-item icon="mtext">Text Box</menu-item><menu-item icon="mline">Line</menu-item><menu-item icon="mtable">Table</menu-item><menu-item icon="mmatrix">Matrix</menu-item><menu-item icon="mrect" hot marked>Rectangle</menu-item><menu-item icon="mlist">List</menu-item><menu-item icon="mimage">Image</menu-item><menu-item icon="msub">Subreport</menu-item><menu-item icon="chart">Chart</menu-item><menu-item icon="gauge">Gauge</menu-item><menu-item icon="map">Map</menu-item><menu-item icon="databar">Data Bar</menu-item><menu-item icon="sparkline">Sparkline</menu-item><menu-item icon="mindicator">Indicator</menu-item>
    </popup-menu>
    <step-note class="n1">1.Now please choose the Cell "[Sum(Net_QTY)]" and Click the mouse's right Button !
2. select the Icon "Insert &gt;&gt; Rectangle" of the  popup-menu !</step-note>
  </section>
  <step-arrow class="a1" width="93" height="58" neck="48" shaft="28"></step-arrow>
  <section class="two"><app-window></app-window><step-note class="n2">On the ribbon, click the Indicator icon, and then click inside the rectangle!</step-note></section>
  <step-arrow class="a2" width="66" height="60" neck="34" shaft="28"></step-arrow>
  <section class="three">
    <report-page><span slot="cell" class="gauge"></span></report-page>
    <indicator-dialog></indicator-dialog>
    <step-note class="n3">Keep System-default 『Directional indicator』In the  dialog box "Indicator Type" !</step-note>
    <step-note class="n4">Finally please click the Button "OK" in the red-marked !</step-note>
  </section>`);
</script>
</body>
</html>
